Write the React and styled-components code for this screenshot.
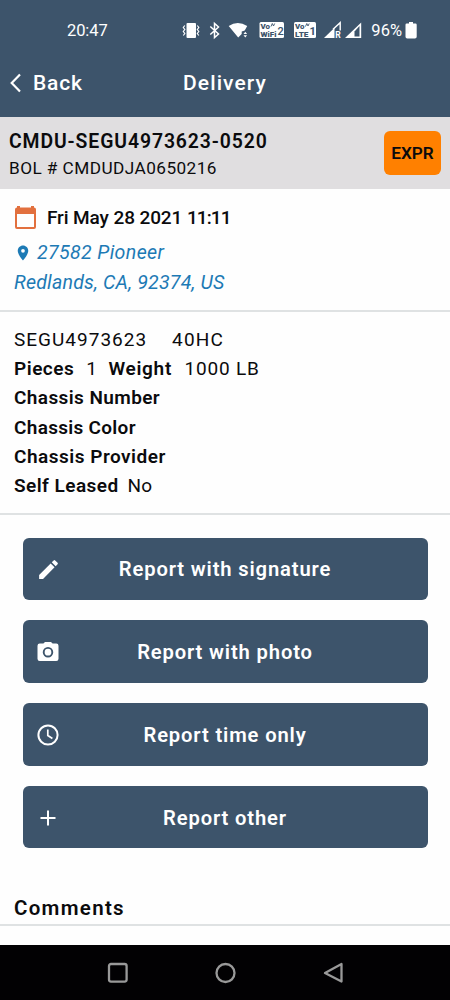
import React from 'react';
import styled, { createGlobalStyle } from 'styled-components';

const Global = createGlobalStyle`
  * { box-sizing: border-box; }
  body { margin: 0; background: #fff; font-family: Roboto, "Liberation Sans", sans-serif; color: #0b0b0d; }
`;

const Screen = styled.div`
  width: 450px;
  height: 1000px;
  display: flex;
  flex-direction: column;
  background: #fefefe;
  overflow: hidden;
`;

const Text = styled.span`
  font-size: ${(p) => p.$size || 19}px;
  font-weight: ${(p) => p.$weight || 400};
  letter-spacing: ${(p) => p.$track || 0}px;
  font-style: ${(p) => (p.$italic ? 'italic' : 'normal')};
  margin-left: ${(p) => p.$gap || 0}px;
  white-space: pre;
`;

const StatusBar = styled.div`
  height: 50px;
  flex: none;
  padding: 11px 33px 0 67px;
  display: flex;
  justify-content: space-between;
  align-items: flex-start;
  background: #3d546b;
  color: #fff;
  line-height: 40px;
`;

const StatusIcons = styled.svg`
  display: block;
  width: 184px;
  height: 40px;
`;

const StatusRight = styled.div`
  display: flex;
  gap: 3px;
`;

const Header = styled.header`
  height: 67px;
  flex: none;
  padding: 0 10px;
  display: grid;
  grid-template-columns: 1fr auto 1fr;
  background: #3d546b;
  color: #fff;
  line-height: 66px;
`;

const Back = styled.div`
  height: 66px;
  display: flex;
  align-items: center;
  gap: 11px;
`;

const Band = styled.div`
  height: 72px;
  flex: none;
  padding: 0 9px;
  display: flex;
  justify-content: space-between;
  align-items: center;
  background: #e0dee0;
`;

const Stack = styled.div`
  display: flex;
  flex-direction: column;
  line-height: 27px;
  padding-top: 3px;
`;

const Badge = styled.div`
  width: 57px;
  height: 44px;
  display: flex;
  align-items: center;
  justify-content: center;
  border-radius: 6px;
  background: #ff8000;
`;

const Section = styled.section`
  height: ${(p) => p.$height}px;
  flex: none;
  padding: ${(p) => p.$top}px 14px 0;
  border-bottom: 2px solid #dfe2e3;
`;

const Row = styled.div`
  display: flex;
  align-items: center;
  height: ${(p) => p.$height || 29.2}px;
  color: ${(p) => p.$color || 'inherit'};
`;

const Actions = styled.div`
  flex: none;
  display: flex;
  flex-direction: column;
  gap: 20.3px;
  padding: 22.5px 22.5px 0;
`;

const Action = styled.button`
  height: 62.5px;
  border: 0;
  border-radius: 6px;
  padding: 1px 13px 0;
  display: grid;
  grid-template-columns: 24px 1fr 24px;
  align-items: center;
  background: #3d546b;
  color: #fff;
  font-family: inherit;
  line-height: 26px;
  text-align: center;
`;

const Comments = styled.div`
  height: 78px;
  flex: none;
  padding: 0 14px;
  display: flex;
  align-items: flex-end;
  line-height: 32px;
  border-bottom: 2px solid #dfe2e3;
`;

const NavBar = styled.nav`
  margin-top: auto;
  height: 55px;
  flex: none;
  display: flex;
  justify-content: center;
  align-items: center;
  gap: 84px;
  background: #020103;
`;

const Icon = ({ d, size = 24 }) => (
  <svg width={size} height={size} viewBox="0 0 24 24" fill="currentColor"><path d={d} /></svg>
);

const PENCIL = 'M3 17.25V21h3.75L17.81 9.94l-3.75-3.75L3 17.25zM20.71 7.04a1 1 0 0 0 0-1.41l-2.34-2.34a1 1 0 0 0-1.41 0l-1.83 1.83 3.75 3.75 1.83-1.83z';
const PIN = 'M12 2C8.13 2 5 5.13 5 9c0 5.25 7 13 7 13s7-7.75 7-13c0-3.87-3.13-7-7-7zm0 9.5a2.5 2.5 0 1 1 0-5 2.5 2.5 0 0 1 0 5z';

const icons = {
  pencil: <Icon d={PENCIL} size={25} />,
  camera: (
    <svg width="24" height="24" viewBox="0 0 24 24">
      <path fill="#fff" d="M9 1.900 7.400 3.600H3.700a2.200 2.200 0 0 0-2.200 2.200v12.900a2.200 2.200 0 0 0 2.200 2.200h16.600a2.200 2.200 0 0 0 2.200-2.200V5.800a2.200 2.200 0 0 0-2.200-2.200h-3.700L15 1.900z" />
      <circle cx="12" cy="12.200" r="4.300" fill="#fff" stroke="#3d546b" strokeWidth="1.900" />
    </svg>
  ),
  clock: (
    <svg width="24" height="24" viewBox="0 0 24 24" fill="none" stroke="#fff" strokeWidth="2">
      <circle cx="12" cy="12" r="9.600" />
      <path d="M11.800 6.500v6l4.600 3" strokeWidth="1.700" />
    </svg>
  ),
  plus: (
    <svg width="24" height="24" viewBox="0 0 24 24" stroke="#fff" strokeWidth="2">
      <path d="M4.500 12h15M12 4.500v15" />
    </svg>
  ),
};

const actions = [
  ['pencil', 'Report with signature'],
  ['camera', 'Report with photo'],
  ['clock', 'Report time only'],
  ['plus', 'Report other'],
];

export default function App() {
  return (
    <Screen>
      <Global />
      <StatusBar>
        <Text $size={16.5} $track={-0.1}>20:47</Text>
        <StatusRight>
          <StatusIcons viewBox="180 11 184 40" fill="#fff">
            <rect x="187.500" y="23" width="9.500" height="15" rx="1" />
            <path d="M185.800 25.500l-1.500 2 1.500 2-1.500 2 1.500 2-1.500 2M198.300 25.500l1.500 2-1.500 2 1.500 2-1.500 2 1.500 2" fill="none" stroke="#fff" strokeWidth="1.200" />
            <path d="M211.300 26.500l8.200 7.500-4 3.500v-14l4 3.500-8.200 7.500" fill="none" stroke="#fff" strokeWidth="1.500" />
            <path d="M229.700 26q9-6 18.500 0l-2.500 4.500-3 1v2.500l-3.500 3.500z" />
            <path d="M244.500 34l1.800-2.200 1.800 2.200zM244.500 35.200l1.800 2.200 1.800-2.200z" />
            <rect x="260.500" y="22" width="24.500" height="16" rx="1.500" />
            <rect x="295" y="22" width="22" height="16" rx="1.500" />
            <g fill="#3d546b" fontFamily="Roboto" fontWeight="900">
              <text x="261.500" y="28.600" fontSize="6.600" textLength="9.500" lengthAdjust="spacingAndGlyphs">Vo</text>
              <text x="261.500" y="37" fontSize="6.800" textLength="16" lengthAdjust="spacingAndGlyphs">WiFi</text>
              <text x="278.500" y="34.500" fontSize="11" fontWeight="500">2</text>
              <text x="296" y="28.600" fontSize="6.600" textLength="9.500" lengthAdjust="spacingAndGlyphs">Vo</text>
              <text x="296" y="37" fontSize="6.800" textLength="13.500" lengthAdjust="spacingAndGlyphs">LTE</text>
              <text x="310.500" y="34.500" fontSize="11" fontWeight="700">1</text>
            </g>
            <path d="M272 26.500l1.300-3 1.200 2.500 1.200-2.500M306.500 26.500l1.300-3 1.200 2.500 1.200-2.500" fill="none" stroke="#3d546b" strokeWidth="0.900" />
            <path d="M325 38l10.500-10.200V38z" />
            <path d="M334 29.300l7.200-6.600v7.800" fill="none" stroke="#fff" strokeWidth="1.400" />
            <text x="336.300" y="38.300" fontSize="8.500" fontFamily="Roboto" fontWeight="700">R</text>
            <path d="M346 38l16.200-15.500V38z" />
            <path d="M355.500 31.500l5-5.500v10.500h-5z" fill="#3d546b" />
          </StatusIcons>
          <StatusRight>
            <Text $size={16.5} $gap={5.5}>96%</Text>
            <svg width="12" height="40" viewBox="0 0 12 40" fill="#fff">
              <path d="M4 11h4v1.500h2.500a1.200 1.200 0 0 1 1.200 1.200v12a1.800 1.800 0 0 1-1.800 1.800H2.300a1.800 1.800 0 0 1-1.800-1.800v-12a1.200 1.200 0 0 1 1.200-1.200H4z" />
            </svg>
          </StatusRight>
        </StatusRight>
      </StatusBar>
      <Header>
        <Back>
          <svg width="12" height="20" viewBox="0 0 12 20" fill="none" stroke="#fff" strokeWidth="2.200">
            <path d="M10 1.500 1.700 10l8.300 8.500" />
          </svg>
          <Text $size={21} $weight={500} $track={0.8}>Back</Text>
        </Back>
        <Text $size={21} $weight={500} $track={1.1}>Delivery</Text>
      </Header>
      <Band>
        <Stack>
          <Text $size={19.4} $weight={600} $track={0.9}>CMDU-SEGU4973623-0520</Text>
          <Text $size={17.2} $track={0.45}>BOL # CMDUDJA0650216</Text>
        </Stack>
        <Badge><Text $size={17.2} $weight={600}>EXPR</Text></Badge>
      </Band>
      <Section $height={123} $top={11}>
        <Row $height={35}>
          <svg width="23" height="25" viewBox="0 0 23 25" fill="#e2703e">
            <path fillRule="evenodd" d="M3 2.500V1h3v1.500h11V1h3v1.500a2 2 0 0 1 2 2V22a2 2 0 0 1-2 2H3a2 2 0 0 1-2-2V4.500a2 2 0 0 1 2-2zM3 9v13h17V9z" />
          </svg>
          <Text $weight={500} $gap={10} $track={-0.1}>Fri May 28 2021 </Text>
          <Text $weight={500} $track={-0.9}>11:11</Text>
        </Row>
        <Row $color="#1d7ab5" $height={35.5}>
          <Icon d={PIN} size={18} />
          <Text $italic $size={19.6} $gap={5} $track={0.35}>27582 Pioneer</Text>
        </Row>
        <Row $color="#1d7ab5" $height={24}>
          <Text $italic $size={19.6} $track={0.2}>Redlands, CA, 92374, US</Text>
        </Row>
      </Section>
      <Section $height={203} $top={13}>
        <Row><Text $track={1}>SEGU4973623</Text><Text $gap={25} $track={1.2}>40HC</Text></Row>
        <Row>
          <Text $weight={600} $track={0.5}>Pieces</Text>
          <Text $gap={12}>1</Text>
          <Text $weight={600} $track={0.7} $gap={11.5}>Weight</Text>
          <Text $gap={12.5} $track={0.8}>1000 LB</Text>
        </Row>
        <Row><Text $weight={600} $track={0.4}>Chassis Number</Text></Row>
        <Row><Text $weight={600} $track={0.3}>Chassis Color</Text></Row>
        <Row><Text $weight={600} $track={0.5}>Chassis Provider</Text></Row>
        <Row>
          <Text $weight={600} $track={0.45}>Self Leased</Text>
          <Text $gap={9} $track={0.2}>No</Text>
        </Row>
      </Section>
      <Actions>
        {actions.map(([icon, label]) => (
          <Action key={icon}>
            {icons[icon]}
            <Text $size={20.2} $weight={600} $track={0.85}>{label}</Text>
          </Action>
        ))}
      </Actions>
      <Comments><Text $size={20.5} $weight={600} $track={1.3}>Comments</Text></Comments>
      <NavBar>
        <svg width="24" height="24" viewBox="0 0 24 24" fill="none" stroke="#999" strokeWidth="2.300">
          <rect x="4" y="3" width="17.600" height="17.600" rx="2" />
        </svg>
        <svg width="24" height="24" viewBox="0 0 24 24" fill="none" stroke="#999" strokeWidth="2.300">
          <circle cx="12.500" cy="12" r="9" />
        </svg>
        <svg width="24" height="24" viewBox="0 0 24 24" fill="none" stroke="#999" strokeWidth="2.300" strokeLinejoin="round">
          <path d="M20.500 3v17.600L4 12z" />
        </svg>
      </NavBar>
    </Screen>
  );
}
